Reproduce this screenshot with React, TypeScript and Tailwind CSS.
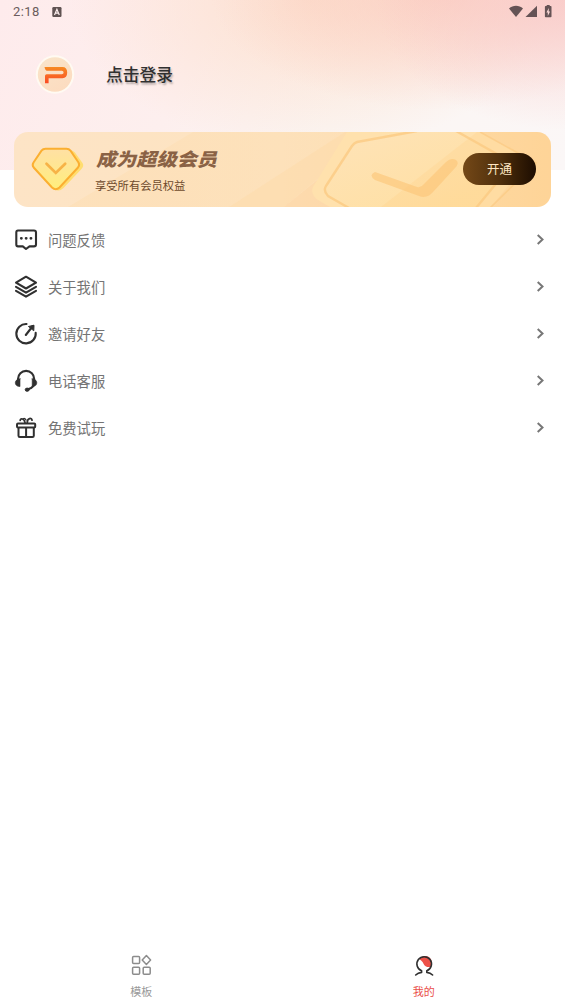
import type { ReactNode } from 'react';

const line = {
  fill: 'none',
  stroke: '#303030',
  strokeWidth: 2.1,
  strokeLinecap: 'round' as const,
  strokeLinejoin: 'round' as const,
};

function StatusBar() {
  return (
    <div className="flex h-6 items-center justify-between pr-[13px] pl-[13px]">
      <div className="flex items-center gap-3 font-[Roboto] text-[13px] tracking-[0.4px] text-[#6b5c5c]">
        <span>2:18</span>
        <svg width="10" height="11" viewBox="0 0 10 11">
          <rect x="0.3" y="0" width="9.2" height="10" rx="1.2" fill="#5f5252" />
          <path d="M2.5 8 4.9 2.3 7.3 8M3.4 6.2h3" fill="none" stroke="#fdeeee" strokeWidth="1.2" />
        </svg>
      </div>
      <svg width="43" height="14" viewBox="0 0 43 14" fill="#655355">
        <path d="M0 3.4C4-.2 10-.2 14 3.4L7 12Z" />
        <path d="M28 .8V12H16.5Z" />
        <path d="M36.7 1h1V0h3v1h1q.8 0 .8.8v9.7q0 .8-.8.8h-5q-.8 0-.8-.8V1.8q0-.8.8-.8Z" />
        <path d="m39.8 3-2.4 4.4h1.4V11l2.3-4.4h-1.4Z" fill="#fbd9d7" />
      </svg>
    </div>
  );
}

function Avatar() {
  return (
    <svg width="40" height="40" viewBox="0 0 40 40">
      <defs>
        <linearGradient id="avatarFace" x1="0" y1="0" x2="0.6" y2="1">
          <stop offset="0" stopColor="#f9e5ca" />
          <stop offset="1" stopColor="#fcdcc0" />
        </linearGradient>
        <linearGradient id="letter" x1="0" y1="0" x2="0" y2="1">
          <stop offset="0" stopColor="#f68a22" />
          <stop offset="1" stopColor="#fb4b25" />
        </linearGradient>
      </defs>
      <circle cx="20" cy="19.5" r="19.2" fill="#fffaf2" />
      <circle cx="20" cy="19.5" r="17.2" fill="url(#avatarFace)" />
      <path
        d="M9.5 12H27.4q4.8 0 4.8 5.6T27.4 23.2H13.6V28.2H10V21q0-1.7 1.7-1.7H26.8q1.8 0 1.8-1.7T26.8 15.7H12q-1.8 0-2.5-3.7Z"
        fill="url(#letter)"
      />
    </svg>
  );
}

function CardArt() {
  return (
    <svg className="absolute inset-0" width="537" height="75" viewBox="0 0 537 75">
      <defs>
        <linearGradient id="cardBg" x1="0" y1="0" x2="1" y2="0">
          <stop offset="0" stopColor="#fde4c6" />
          <stop offset="0.5" stopColor="#fde3c0" />
          <stop offset="1" stopColor="#fed79f" />
        </linearGradient>
        <linearGradient id="ray" x1="0" y1="0" x2="1" y2="0">
          <stop offset="0" stopColor="#fdd9a5" stopOpacity="0.3" />
          <stop offset="1" stopColor="#fddfb4" stopOpacity="0.4" />
        </linearGradient>
        <linearGradient id="plate" x1="0" y1="0" x2="1" y2="1">
          <stop offset="0" stopColor="#fee3b8" />
          <stop offset="1" stopColor="#ffdf9f" />
        </linearGradient>
      </defs>
      <rect width="537" height="75" fill="url(#cardBg)" />
      <path d="M54 75 179 0H331L215 75Z" fill="url(#ray)" />
      <path d="M215 75 331 0H360L270 75Z" fill="#fddba9" opacity="0.6" />
      <path d="M270 75 340 18V75Z" fill="#fdd49f" opacity="0.55" />
      <path d="M333 0 299 55Q296 62 304 68L316 75H477L515 28 466 0Z" fill="#ffe1ad" />
      <path d="M396 0 343 9Q340 10 338 13L311 54Q309 59 314 64L333 75H463L500 32 443 0Z" fill="url(#plate)" />
      <path d="M367 75 463 0H537V75Z" fill="#ffce82" opacity="0.24" />
      <path
        d="M403-1 343 10Q340 11 338 14L312 54Q309 59 314 64L335 76M442-1 499 31 462 76"
        fill="none"
        stroke="#fbca83"
        strokeWidth="2.4"
        opacity="0.8"
      />
      <path d="M466 0 522 31 476 76" fill="none" stroke="#fbca83" strokeWidth="1.6" opacity="0.7" />
      <path
        d="M361 40 403 55Q407 56 410 52L431 31Q437 25 442 28 446 31 441 36L419 60Q413 67 405 64L361 48Q354 43 361 40Z"
        fill="#fcc67a"
        opacity="0.65"
      />
    </svg>
  );
}

function Gem() {
  return (
    <svg width="56" height="48" viewBox="0 0 56 48">
      <defs>
        <linearGradient id="gem" x1="0" y1="0" x2="0" y2="1">
          <stop offset="0" stopColor="#ffe0a4" />
          <stop offset="1" stopColor="#ffee7c" />
        </linearGradient>
      </defs>
      <path d="M17 4.5H41Q44 4.5 46 8L52.5 17Q54.5 20 51 23.5L33.5 42Q28 47 23 42L8 24Z" fill="#ffdd70" />
      <path
        d="M15.5 2.7H36.5Q39 2.7 40.5 4.7L48.5 16.5Q50 19 48 21.5L29.5 41.5Q25.7 45 22 41.5L3.7 21.5Q1.8 19 3.5 16.5L11.5 4.7Q13 2.7 15.5 2.7Z"
        fill="url(#gem)"
        stroke="#fbaf31"
        strokeWidth="2"
      />
      <path d="m16.5 17.7 9.3 9.2 9.4-9.2" fill="none" stroke="#f7b347" strokeWidth="2.7" strokeLinecap="round" />
    </svg>
  );
}

function MemberCard() {
  return (
    <div className="relative h-[75px] w-[537px] overflow-hidden rounded-[14px]">
      <CardArt />
      <div className="relative flex h-full items-center pr-[15px] pl-4">
        <Gem />
        <div className="ml-[9px] flex flex-1 flex-col">
          <span className="origin-bottom-left -skew-x-[13deg] scale-y-90 text-[20.2px] leading-[24px] font-black text-[#8a6245]">
            成为超级会员
          </span>
          <span className="mt-[6px] text-[11.3px] leading-[18px] text-[#6e4a2c]">享受所有会员权益</span>
        </div>
        <button className="mb-[2px] h-8 w-[73px] rounded-full bg-linear-to-r from-[#744817] via-[#50300d] to-[#1d0d02] text-[12.5px] leading-8 text-[#ffe7c3]">
          开通
        </button>
      </div>
    </div>
  );
}

const feedback = (
  <g {...line}>
    <path d="M4 2.5H20Q22 2.5 22 4.5V16.6Q22 18.4 20 18.4H15.5L12 21 8.8 18.4H4Q2.3 18.4 2.3 16.6V4.5Q2.3 2.5 4 2.5Z" />
    <path d="M7.3 10.3h.1M12.1 10.3h.1M16.9 10.3h.1" strokeWidth="2.8" />
  </g>
);
const layers = (
  <g {...line}>
    <path d="m2 7.7 10-6 10 6-10 5.8Z" />
    <path d="m2 11.9 10 5.8 10-5.8M2 15.8l10 5.8 10-5.8" />
  </g>
);
const invite = (
  <g {...line}>
    <path d="M12.5 2A9.7 9.7 0 1 0 21.7 10.8" />
    <path d="m11.8 13 7-9" />
    <path d="m14.8 4.4 5.2-1.2-.2 5.2Z" fill="#303030" strokeWidth="1" />
  </g>
);
const headset = (
  <g {...line}>
    <path d="M4 12V10a8.1 8.1 0 0 1 16.2 0V14q0 4.4-5.8 6" />
    <path
      d="M6 9.8v7.8C2.6 17.4 1.3 15.8 1.3 13.8S3 10.1 6 9.8ZM18.2 9.8v7.8c3.3-.2 4.6-1.8 4.6-3.8S21.2 10.1 18.2 9.8Z"
      fill="#303030"
      strokeWidth="0.6"
    />
    <ellipse cx="13.2" cy="20.7" rx="2" ry="1.6" fill="#303030" strokeWidth="1" />
  </g>
);
const gift = (
  <g {...line} strokeWidth={2}>
    <rect x="3" y="7.6" width="18.2" height="4" rx="1" />
    <path d="M4.5 12v7.7q0 1.3 1.3 1.3h12.7q1.3 0 1.3-1.3V12M12.1 12v8.6" />
    <path d="M11 6.6C10.5 3 6.6 1.4 6.2 4.4M13.3 6.6C13 1.8 18 1.4 18 4.2" strokeWidth="1.8" />
    <path d="M9.6 2.5q1.4-.4 2.4 1.5" strokeWidth="1.3" />
  </g>
);

const items: { label: string; icon: ReactNode }[] = [
  { label: '问题反馈', icon: feedback },
  { label: '关于我们', icon: layers },
  { label: '邀请好友', icon: invite },
  { label: '电话客服', icon: headset },
  { label: '免费试玩', icon: gift },
];

function MenuRow({ label, icon }: { label: string; icon: ReactNode }) {
  return (
    <div className="flex h-[47.1px] items-center pr-5 pl-[14px]">
      <svg width="24" height="24" viewBox="0 0 24 24">
        {icon}
      </svg>
      <span className="ml-[10px] flex-1 text-[14.3px] leading-5 text-[#747474]">{label}</span>
      <svg width="9" height="12" viewBox="0 0 9 12">
        <path d="M1.7 1.1 6.5 5.6 1.7 10.1" fill="none" stroke="#777" strokeWidth="2" />
      </svg>
    </div>
  );
}

function BottomNav() {
  return (
    <nav className="grid h-[51px] grid-cols-2 text-[11px] leading-4">
      <div className="flex flex-col items-center text-[#999]">
        <svg width="24" height="24" viewBox="0 0 24 24" fill="none" stroke="#8c8c8c" strokeWidth="1.5">
          <rect x="3.6" y="3.6" width="7" height="7" rx="1" />
          <path d="m17.4 2.6 4.2 4.4-4.2 4.4L13.2 7Z" strokeLinejoin="round" />
          <rect x="3.6" y="14.3" width="7" height="7" rx="1" />
          <rect x="14.2" y="14.3" width="7" height="7" rx="1" />
        </svg>
        <span className="mt-[6px]">模板</span>
      </div>
      <div className="flex flex-col items-center text-[#ea4f4a]">
        <svg width="24" height="24" viewBox="0 0 24 24">
          <path d="M7.5 6.2C9.5 2.5 15 2 18 5c2.4 2.7 2.5 6 .7 9-4 .4-6-.8-7.2-3.3C10.5 8.600 9.500 7.400 7.500 6.200Z" fill="#ed5148" />
          <path
            d="M3.7 22Q6 19.8 9.6 19.4V17.8A7.3 7.3 0 1 1 14.8 17.8V19.4Q18.4 19.8 20.6 22"
            fill="none"
            stroke="#303030"
            strokeWidth="1.6"
            strokeLinecap="round"
            strokeLinejoin="round"
          />
        </svg>
        <span className="mt-[6px]">我的</span>
      </div>
    </nav>
  );
}

export default function App() {
  return (
    <div className="flex h-[1004px] w-[565px] flex-col overflow-hidden bg-white font-['Noto_Sans_CJK_SC',sans-serif]">
      <header className="h-[170px] bg-[radial-gradient(ellipse_190px_130px_at_565px_0,#f9c5c3c0_0%,#f9c5c368_45%,#f9c5c300_100%),radial-gradient(ellipse_230px_120px_at_440px_-10px,#fbc5b7b0_0%,#fbc5b760_45%,#fbc5b700_100%),radial-gradient(ellipse_240px_150px_at_310px_0,#fddac3b0_0%,#fddac368_45%,#fddac300_100%),linear-gradient(115deg,#feebec_0%,#fdefee_34%,#fbf5f2_60%,#fbf7f7_100%)]">
        <StatusBar />
        <div className="flex h-[108px] items-start pt-[31px] pl-[35px]">
          <Avatar />
          <span className="mt-[7px] ml-[31px] text-[16.8px] leading-6 font-medium text-[#303030] [text-shadow:1px_2px_2px_#00000048]">
            点击登录
          </span>
        </div>
        <div className="pl-[14px]">
          <MemberCard />
        </div>
      </header>
      <main className="flex-1 pt-[46px]">
        {items.map((item) => (
          <MenuRow key={item.label} {...item} />
        ))}
      </main>
      <BottomNav />
    </div>
  );
}
